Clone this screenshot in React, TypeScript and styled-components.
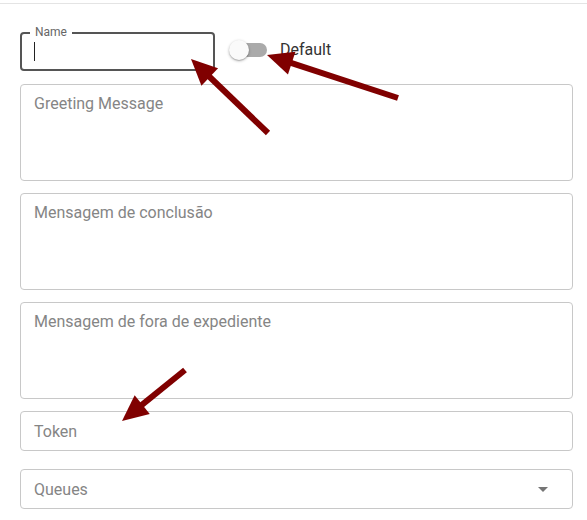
import styled, { createGlobalStyle } from "styled-components";

const GlobalStyle = createGlobalStyle`
  html, body {
    margin: 0;
    padding: 0;
    background: #fff;
    overflow: hidden;
  }
  body {
    font-family: Roboto, "Liberation Sans", Arial, sans-serif;
  }
`;

const Page = styled.div`
  position: relative;
  width: 587px;
  height: 520px;
`;

const Divider = styled.div`
  margin-top: 3px;
  height: 1px;
  background: #e4e4e4;
`;

const Form = styled.div`
  display: flex;
  flex-direction: column;
  padding: 28px 14px 0 20px;
`;

const TopRow = styled.div`
  display: flex;
  align-items: center;
  gap: 14px;
  margin-bottom: 13px;
`;

const NameField = styled.div`
  position: relative;
  box-sizing: border-box;
  width: 195px;
  height: 39px;
  border: 2px solid #555;
  border-radius: 4px;
  display: flex;
  align-items: center;
  padding-left: 12px;
`;

const FloatLabel = styled.span`
  position: absolute;
  top: -9px;
  left: 8px;
  padding: 0 5px;
  background: #fff;
  font-size: 12px;
  line-height: 14px;
  color: #666;
`;

const Caret = styled.span`
  display: block;
  width: 1px;
  height: 19px;
  background: #222;
`;

const SwitchWrap = styled.label`
  display: flex;
  align-items: center;
  gap: 13px;
  font-size: 16px;
  color: #333;
  margin-top: -4px;
`;

const Track = styled.span`
  position: relative;
  display: block;
  width: 32px;
  height: 14px;
  margin-left: 6px;
  border-radius: 7px;
  background: #aaa;
`;

const Thumb = styled.span`
  position: absolute;
  top: -3px;
  left: -6px;
  width: 20px;
  height: 20px;
  border-radius: 50%;
  background: #fafafa;
  box-shadow: 0 1px 3px rgba(0, 0, 0, 0.3), 0 1px 1px rgba(0, 0, 0, 0.14);
`;

const Box = styled.div<{ $tall?: boolean; $gap?: number }>`
  position: relative;
  box-sizing: border-box;
  height: ${(p) => (p.$tall ? "97px" : "40px")};
  margin-bottom: ${(p) => p.$gap ?? 12}px;
  border: 1px solid #c8c8c8;
  border-radius: 4px;
  padding: ${(p) => (p.$tall ? "9px 13px" : "0 13px")};
  display: flex;
  align-items: ${(p) => (p.$tall ? "flex-start" : "center")};
  justify-content: space-between;
  font-size: 16px;
  line-height: 19px;
  color: #858585;
`;

const Caretdown = styled.span`
  width: 0;
  height: 0;
  margin-right: 11px;
  border-left: 5px solid transparent;
  border-right: 5px solid transparent;
  border-top: 5px solid #757575;
`;

const Overlay = styled.svg`
  position: absolute;
  top: 0;
  left: 0;
  pointer-events: none;
`;

const arrows = [
  { tail: [268, 130], tip: [191, 56] },
  { tail: [398, 95], tip: [267, 52] },
  { tail: [185, 367], tip: [122, 418] },
];

const Arrow = ({ tail, tip }: { tail: number[]; tip: number[] }) => {
  const dx = tip[0] - tail[0];
  const dy = tip[1] - tail[1];
  const len = Math.hypot(dx, dy);
  const ux = dx / len;
  const uy = dy / len;
  const headLen = 26;
  const headW = 12;
  const bx = tip[0] - ux * headLen;
  const by = tip[1] - uy * headLen;
  const px = -uy;
  const py = ux;
  const pts = [
    `${tip[0]},${tip[1]}`,
    `${bx + px * headW},${by + py * headW}`,
    `${bx - px * headW},${by - py * headW}`,
  ].join(" ");
  return (
    <g>
      <line x1={tail[0]} y1={tail[1]} x2={bx + ux * 4} y2={by + uy * 4} stroke="#800000" strokeWidth={6} />
      <polygon points={pts} fill="#800000" />
    </g>
  );
};

export default function App() {
  return (
    <>
      <GlobalStyle />
      <Page>
        <Divider />
        <Form>
          <TopRow>
            <NameField>
              <FloatLabel>Name</FloatLabel>
              <Caret />
            </NameField>
            <SwitchWrap>
              <Track>
                <Thumb />
              </Track>
              Default
            </SwitchWrap>
          </TopRow>
          <Box $tall>Greeting Message</Box>
          <Box $tall>Mensagem de conclusão</Box>
          <Box $tall>Mensagem de fora de expediente</Box>
          <Box $gap={18}>Token</Box>
          <Box>
            Queues
            <Caretdown />
          </Box>
        </Form>
        <Overlay width={587} height={520} viewBox="0 0 587 520">
          {arrows.map((a, i) => (
            <Arrow key={i} tail={a.tail} tip={a.tip} />
          ))}
        </Overlay>
      </Page>
    </>
  );
}
